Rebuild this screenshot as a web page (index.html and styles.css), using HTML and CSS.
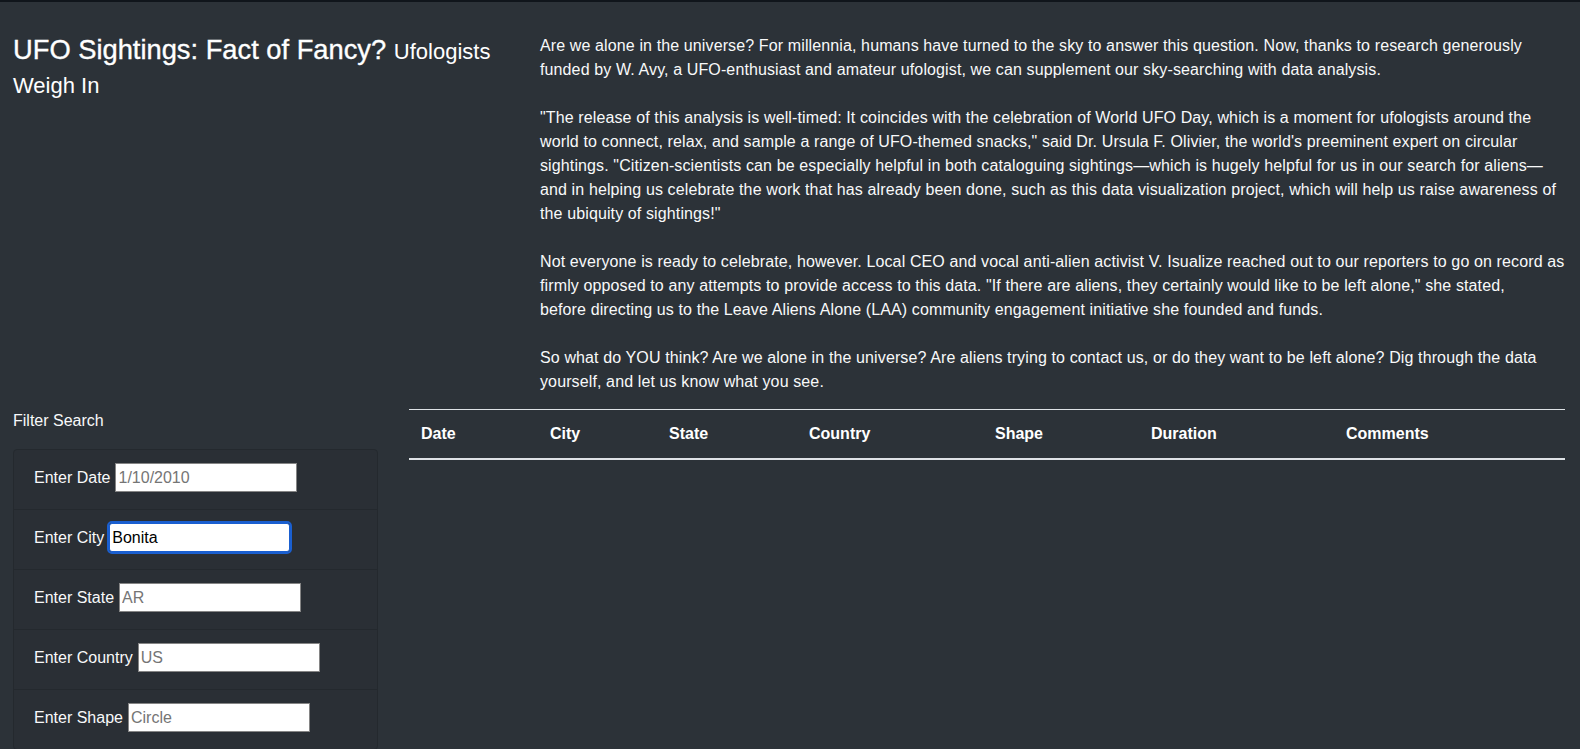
FILE: index.html
```html
<!DOCTYPE html>
<html lang="en">
<head>
<meta charset="utf-8">
<title>UFO Sightings</title>
<link rel="stylesheet" href="styles.css">
</head>
<body>
<div class="page">
  <div class="top-row">
    <h1 class="title">UFO Sightings: Fact of Fancy? <small>Ufologists Weigh In</small></h1>
    <div class="article">
      <p>Are we alone in the universe? For millennia, humans have turned to the sky to answer this question. Now, thanks to research generously funded by W. Avy, a UFO-enthusiast and amateur ufologist, we can supplement our sky-searching with data analysis.</p>
      <p>"The release of this analysis is well-timed: It coincides with the celebration of World UFO Day, which is a moment for ufologists around the world to connect, relax, and sample a range of UFO-themed snacks," said Dr. Ursula F. Olivier, the world's preeminent expert on circular sightings. "Citizen-scientists can be especially helpful in both cataloguing sightings—which is hugely helpful for us in our search for aliens—and in helping us celebrate the work that has already been done, such as this data visualization project, which will help us raise awareness of the ubiquity of sightings!"</p>
      <p>Not everyone is ready to celebrate, however. Local CEO and vocal anti-alien activist V. Isualize reached out to our reporters to go on record as firmly opposed to any attempts to provide access to this data. "If there are aliens, they certainly would like to be left alone," she stated, <span class="nowrap">before directing</span> us to the Leave Aliens Alone (LAA) community engagement initiative she founded and funds.</p>
      <p>So what do YOU think? Are we alone in the universe? Are aliens trying to contact us, or do they want to be left alone? Dig through the data yourself, and let us know what you see.</p>
    </div>
  </div>
  <div class="bottom-row">
    <aside class="filters">
      <p class="filters-title">Filter Search</p>
      <ul class="filter-list">
        <li class="filter-item"><label for="datetime">Enter Date</label><input class="filter-input" id="datetime" type="text" placeholder="1/10/2010"></li>
        <li class="filter-item"><label for="city">Enter City</label><input class="filter-input focused" id="city" type="text" placeholder="Benton" value="Bonita"></li>
        <li class="filter-item"><label for="state">Enter State</label><input class="filter-input" id="state" type="text" placeholder="AR"></li>
        <li class="filter-item"><label for="country">Enter Country</label><input class="filter-input" id="country" type="text" placeholder="US"></li>
        <li class="filter-item"><label for="shape">Enter Shape</label><input class="filter-input" id="shape" type="text" placeholder="Circle"></li>
      </ul>
    </aside>
    <div class="table-wrap">
      <table class="ufo-table">
        <thead>
          <tr>
            <th class="c-date">Date</th>
            <th class="c-city">City</th>
            <th class="c-state">State</th>
            <th class="c-country">Country</th>
            <th class="c-shape">Shape</th>
            <th class="c-duration">Duration</th>
            <th class="c-comments">Comments</th>
          </tr>
        </thead>
        <tbody></tbody>
      </table>
    </div>
  </div>
</div>
</body>
</html>
```

FILE: styles.css
```css
html, body {
  margin: 0;
  padding: 0;
  height: 100%;
  overflow: hidden;
}

body {
  background: #2c3238;
  color: #f8f9fa;
  font-family: "Liberation Sans", Arial, sans-serif;
  font-size: 16px;
  line-height: 1.5;
}

.page {
  border-top: 2px solid #10151b;
  padding: 32px 15px 0 13px;
}

.top-row {
  display: grid;
  grid-template-columns: 501px 1fr;
  column-gap: 26px;
  margin-right: -1px;
}

.title {
  margin: -1px 0 0;
  font-size: 27.3px;
  line-height: 34px;
  font-weight: 500;
  color: #ffffff;
  -webkit-text-stroke: 0.35px #ffffff;
}

.title small {
  font-size: 22px;
  line-height: 1;
  font-weight: 400;
  -webkit-text-stroke: 0;
}

.article {
  letter-spacing: 0.12px;
}

.article p {
  margin: 0 0 24px;
}

.article p:last-child {
  margin-bottom: 15px;
}

.nowrap {
  white-space: nowrap;
}

.bottom-row {
  display: grid;
  grid-template-columns: 365px 1fr;
  column-gap: 31px;
}

.filters-title {
  margin: 0 0 16px;
}

.filter-list {
  list-style: none;
  margin: 0;
  padding: 0;
  border: 1px solid #24292e;
  border-radius: 4px;
  background: #2a2f35;
}

.filter-item {
  box-sizing: border-box;
  height: 59px;
  padding: 0 20px 4px;
  display: flex;
  align-items: center;
  gap: 5px;
}

.filter-item + .filter-item {
  height: 60px;
  border-top: 1px solid #24292e;
}

.filter-input {
  box-sizing: border-box;
  width: 182px;
  height: 29px;
  padding: 1px 2px;
  border: 1px solid #858585;
  border-radius: 0;
  background: #ffffff;
  color: #000000;
  font-family: "Liberation Sans", Arial, sans-serif;
  font-size: 16px;
}

.filter-input::placeholder {
  color: #757575;
}

.filter-input.focused {
  width: 181px;
  border-color: #1a5fd0;
  outline: 2px solid #1a5fd0;
  outline-offset: 0;
  border-radius: 3px;
}

.table-wrap {
  min-width: 0;
}

.ufo-table {
  width: 100%;
  table-layout: fixed;
  border-collapse: collapse;
  color: #ffffff;
}

.ufo-table th {
  text-align: left;
  font-weight: 700;
  padding: 12px;
  line-height: 24px;
  border-top: 1px solid #dee2e6;
  border-bottom: 2px solid #dee2e6;
}

.c-date { width: 105px; }
.c-city { width: 95px; }
.c-state { width: 116px; }
.c-country { width: 162px; }
.c-shape { width: 132px; }
.c-duration { width: 171px; }
```
